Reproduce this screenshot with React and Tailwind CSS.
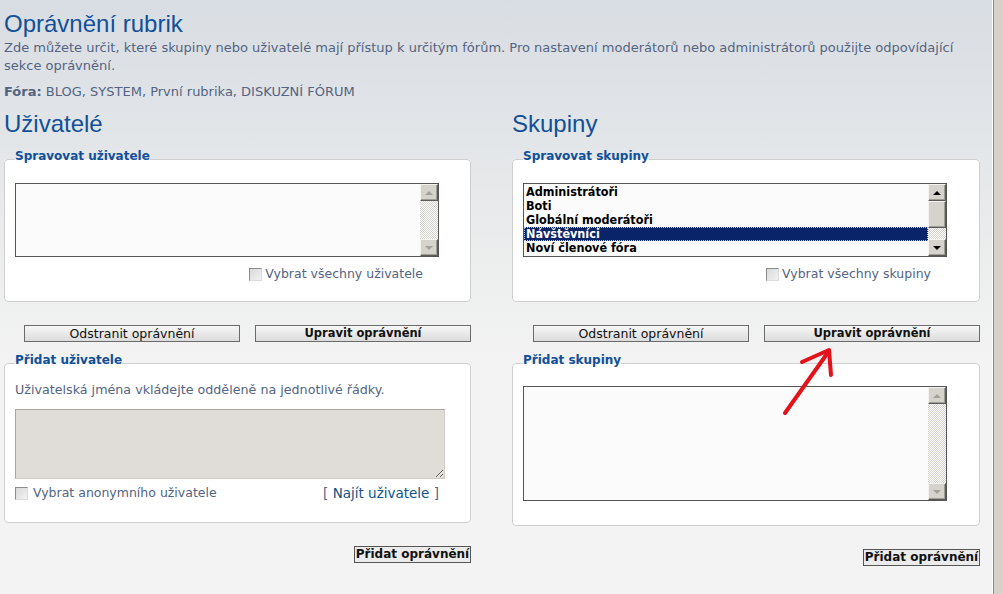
const groups = ["Administrátoři", "Boti", "Globální moderátoři", "Návštěvníci", "Noví členové fóra"];

function Arrow({ up, active }) {
  // tiny classic scrollbar arrow
  const color = active ? "border-b-black" : "border-b-[#a3a19c]";
  const colorDown = active ? "border-t-black" : "border-t-[#a3a19c]";
  return (
    <div className="flex h-[17px] w-full items-center justify-center border border-t-[#f4f3f0] border-l-[#f4f3f0] border-b-[#5c5b58] border-r-[#5c5b58] bg-[#d6d3cc] shadow-[inset_-1px_-1px_0_#a09d96]">
      {up ? (
        <span className={`h-0 w-0 border-x-[4px] border-b-[4px] border-x-transparent ${color}`} />
      ) : (
        <span className={`h-0 w-0 border-x-[4px] border-t-[4px] border-x-transparent ${colorDown}`} />
      )}
    </div>
  );
}

function Scrollbar({ active }) {
  return (
    <div className="flex h-full w-[18px] shrink-0 flex-col">
      <Arrow up active={active} />
      {active && (
        <div className="h-[27px] w-full border border-t-[#f4f3f0] border-l-[#f4f3f0] border-b-[#5c5b58] border-r-[#5c5b58] bg-[#d6d3cc] shadow-[inset_-1px_-1px_0_#a09d96]" />
      )}
      <div className="flex-1 bg-[repeating-conic-gradient(#d6d3cc_0%_25%,#ffffff_0%_50%)] bg-[length:2px_2px]" />
      <Arrow active={active} />
    </div>
  );
}

function ListBox({ items = [], selected, active, height }) {
  return (
    <div className={`flex w-[424px] border border-[#555555] bg-[#fbfbfb] ${height}`}>
      <div className="min-w-0 flex-1 pt-[1px] font-[family-name:DejaVu_Sans_Condensed,DejaVu_Sans,sans-serif] text-[12.5px] font-bold leading-[14px] text-black">
        {items.map((g) => (
          <div
            key={g}
            className={
              g === selected
                ? "h-[14px] border border-dotted border-[#c9c9c9] bg-[#0a246a] pl-[1px] leading-[12px] text-white"
                : "h-[14px] pl-[2px]"
            }
          >
            {g}
          </div>
        ))}
      </div>
      <Scrollbar active={active} />
    </div>
  );
}

function Check() {
  return (
    <span className="inline-block h-[13px] w-[13px] shrink-0 border border-t-[#8c8c8c] border-l-[#8c8c8c] border-b-[#dcdcdc] border-r-[#dcdcdc] bg-[linear-gradient(135deg,#d9d9d9,#f2f2f2)]" />
  );
}

function CheckRow({ label }) {
  return (
    <div className="mt-[8px] flex w-[424px] items-center justify-end gap-[3px] pr-[16px] text-[12.5px] leading-[18px]">
      <Check />
      <span>{label}</span>
    </div>
  );
}

function Fieldset({ legend, className, children }) {
  return (
    <fieldset className={`rounded-[4px] border border-[#cfcfcf] bg-white px-[10px] ${className}`}>
      <legend className="relative top-[-3px] text-[12px] font-bold leading-[14px] text-[#115098]">{legend}</legend>
      {children}
    </fieldset>
  );
}

function Btn({ children, bold }) {
  return (
    <button
      type="button"
      className={`h-[17px] w-[216px] border border-[#6b6b6b] bg-[linear-gradient(180deg,#f7f7f7,#dcdcdc)] leading-[15px] text-[#111] ${
        bold ? "text-[11.5px] font-bold" : "text-[12.5px]"
      }`}
    >
      {children}
    </button>
  );
}

function ButtonRow() {
  return (
    <div className="mt-[23px] flex justify-end gap-[15px]">
      <Btn>Odstranit oprávnění</Btn>
      <Btn bold>Upravit oprávnění</Btn>
    </div>
  );
}

function SubmitRow() {
  return (
    <div className="mt-[23px] flex justify-end">
      <button
        type="button"
        className="h-[17px] w-[117px] border border-[#555555] bg-[#ebebeb] text-[12px] font-bold leading-[15px] text-[#111]"
      >
        Přidat oprávnění
      </button>
    </div>
  );
}

const heading = "text-[24px] leading-[28px] text-[#115098] font-[family-name:Liberation_Sans,Arial,sans-serif]";

export default function App() {
  return (
    <div className="relative flex h-[594px] w-full overflow-hidden bg-[linear-gradient(180deg,#d8dde3_0px,#eceded_260px,#f3f3f3_360px)] font-[family-name:DejaVu_Sans,Verdana,sans-serif] text-[#536482]">
      <div className="flex-1 pl-[4px]">
        <h1 className={`mt-[10px] ${heading}`}>Oprávnění rubrik</h1>
        <p className="mt-[1px] text-[13px] leading-[18px]">
          Zde můžete určit, které skupiny nebo uživatelé mají přístup k určitým fórům. Pro nastavení moderátorů nebo administrátorů použijte odpovídající
          <br />
          sekce oprávnění.
        </p>
        <p className="mt-[8px] text-[13px] leading-[18px]">
          <b>Fóra:</b> BLOG, SYSTEM, První rubrika, DISKUZNÍ FÓRUM
        </p>

        <div className="mt-[9px] flex gap-[41px]">
          {/* Uživatelé */}
          <div className="w-[467px]">
            <h2 className={heading}>Uživatelé</h2>
            <Fieldset legend="Spravovat uživatele" className="mt-[14px] pt-[17px] pb-[18px]">
              <ListBox height="h-[74px]" />
              <CheckRow label="Vybrat všechny uživatele" />
            </Fieldset>
            <ButtonRow />
            <Fieldset legend="Přidat uživatele" className="mt-[14px] pt-[11px] pb-[20px]">
              <p className="text-[12.7px] leading-[18px]">Uživatelská jména vkládejte odděleně na jednotlivé řádky.</p>
              <textarea
                readOnly
                defaultValue=""
                className="mt-[10px] block h-[70px] w-[430px] resize border border-t-[#aaa69f] border-l-[#aaa69f] border-b-[#d0ccc5] border-r-[#d0ccc5] bg-[#e0ddd8] outline-none"
              />
              <div className="mt-[5px] flex w-[424px] items-center justify-between text-[12.5px] leading-[18px]">
                <div className="flex items-center gap-[5px]">
                  <Check />
                  <span>Vybrat anonymního uživatele</span>
                </div>
                <span className="text-[13.5px]">
                  [ <a className="text-[#105289]">Najít uživatele</a> ]
                </span>
              </div>
            </Fieldset>
            <SubmitRow />
          </div>

          {/* Skupiny */}
          <div className="w-[468px]">
            <h2 className={heading}>Skupiny</h2>
            <Fieldset legend="Spravovat skupiny" className="mt-[14px] pt-[17px] pb-[18px]">
              <ListBox height="h-[74px]" items={groups} selected="Návštěvníci" active />
              <CheckRow label="Vybrat všechny skupiny" />
            </Fieldset>
            <ButtonRow />
            <Fieldset legend="Přidat skupiny" className="mt-[14px] pt-[16px] pb-[24px]">
              <ListBox height="h-[115px]" />
            </Fieldset>
            <SubmitRow />
          </div>
        </div>
      </div>

      {/* window scrollbar edge */}
      <div className="w-[11px] shrink-0 border-l border-l-white">
        <div className="h-full border-l border-l-[#8a8a8a] bg-[#d6d2ca]" />
      </div>

      {/* red hand-drawn arrow */}
      <svg className="pointer-events-none absolute left-[780px] top-[344px] h-[74px] w-[56px]" viewBox="0 0 56 74" fill="none">
        <path d="M5 69 Q 27 38 49 7" stroke="#e3121b" strokeWidth="4" strokeLinecap="round" />
        <path d="M22 18 L49 6 L51 31" stroke="#e3121b" strokeWidth="4" strokeLinecap="round" strokeLinejoin="round" />
      </svg>
    </div>
  );
}
